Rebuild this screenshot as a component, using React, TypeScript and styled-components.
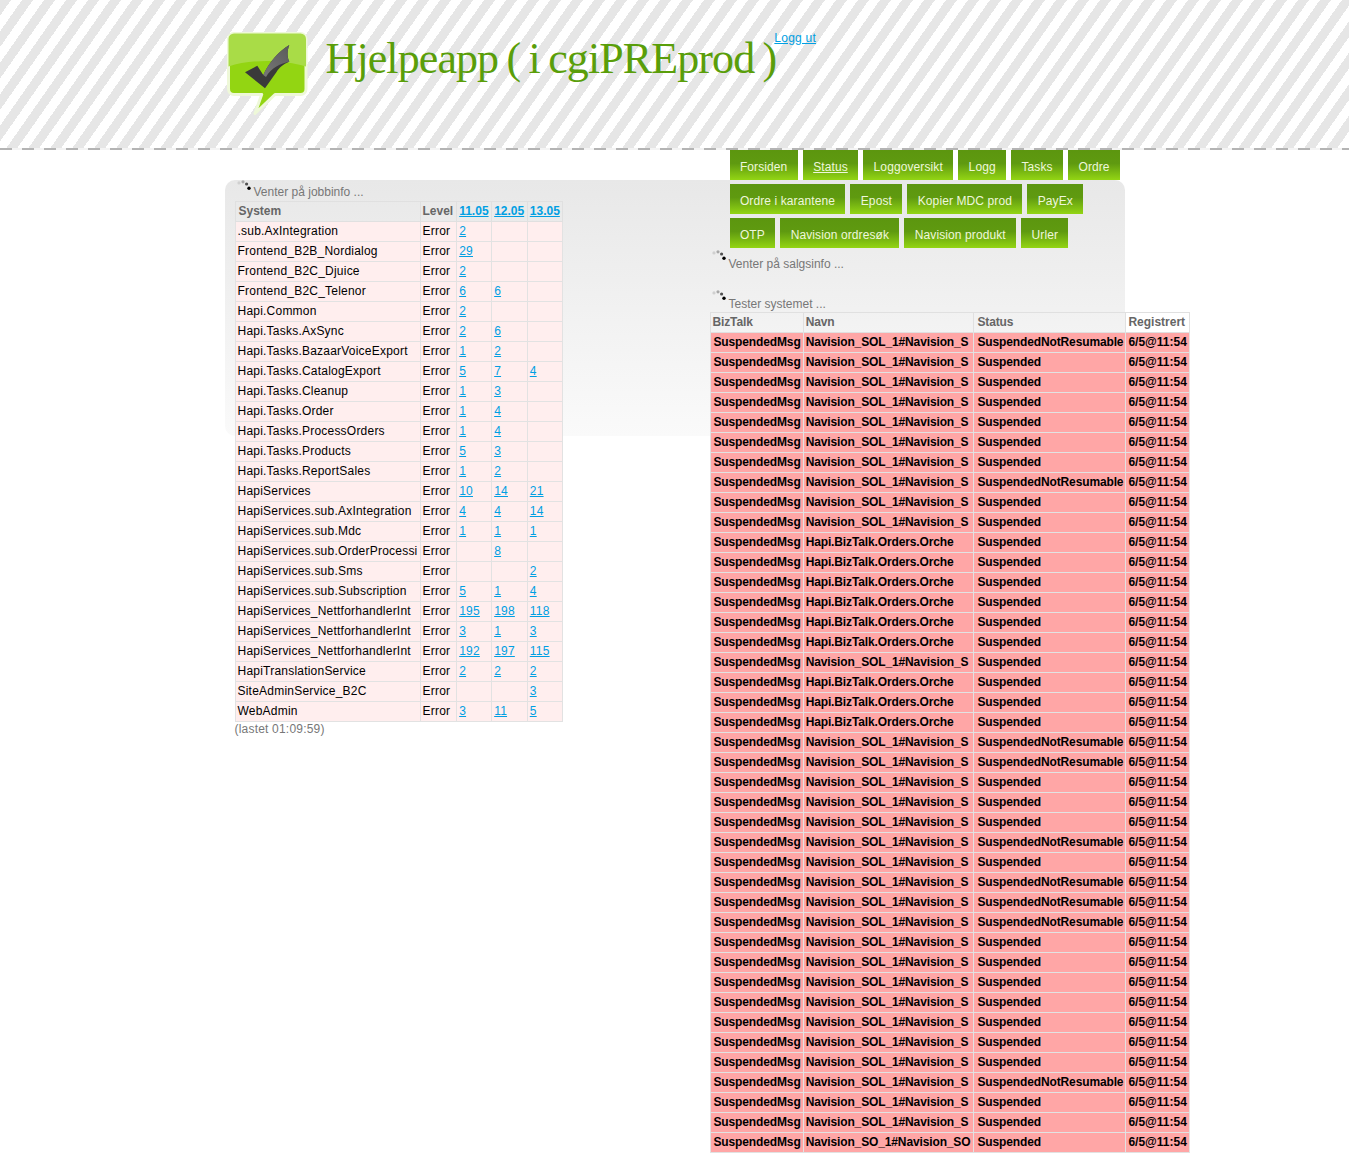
import React from "react";
import styled, { createGlobalStyle } from "styled-components";

const GlobalStyle = createGlobalStyle`
  html, body {
    margin: 0;
    padding: 0;
    background: #fff;
    font-family: "Liberation Sans", Arial, sans-serif;
    font-size: 12px;
    color: #000;
  }
`;

const DATES = ["11.05", "12.05", "13.05"];

const systems: [string, string, string, string][] = [
  [".sub.AxIntegration", "2", "", ""],
  ["Frontend_B2B_Nordialog", "29", "", ""],
  ["Frontend_B2C_Djuice", "2", "", ""],
  ["Frontend_B2C_Telenor", "6", "6", ""],
  ["Hapi.Common", "2", "", ""],
  ["Hapi.Tasks.AxSync", "2", "6", ""],
  ["Hapi.Tasks.BazaarVoiceExport", "1", "2", ""],
  ["Hapi.Tasks.CatalogExport", "5", "7", "4"],
  ["Hapi.Tasks.Cleanup", "1", "3", ""],
  ["Hapi.Tasks.Order", "1", "4", ""],
  ["Hapi.Tasks.ProcessOrders", "1", "4", ""],
  ["Hapi.Tasks.Products", "5", "3", ""],
  ["Hapi.Tasks.ReportSales", "1", "2", ""],
  ["HapiServices", "10", "14", "21"],
  ["HapiServices.sub.AxIntegration", "4", "4", "14"],
  ["HapiServices.sub.Mdc", "1", "1", "1"],
  ["HapiServices.sub.OrderProcessi", "", "8", ""],
  ["HapiServices.sub.Sms", "", "", "2"],
  ["HapiServices.sub.Subscription", "5", "1", "4"],
  ["HapiServices_NettforhandlerInt", "195", "198", "118"],
  ["HapiServices_NettforhandlerInt", "3", "1", "3"],
  ["HapiServices_NettforhandlerInt", "192", "197", "115"],
  ["HapiTranslationService", "2", "2", "2"],
  ["SiteAdminService_B2C", "", "", "3"],
  ["WebAdmin", "3", "11", "5"],
];

const NAV_ITEMS = [
  "Forsiden",
  "Status",
  "Loggoversikt",
  "Logg",
  "Tasks",
  "Ordre",
  "Ordre i karantene",
  "Epost",
  "Kopier MDC prod",
  "PayEx",
  "OTP",
  "Navision ordresøk",
  "Navision produkt",
  "Urler",
];

const NAV = "Navision_SOL_1#Navision_S";
const HAPI = "Hapi.BizTalk.Orders.Orche";
const SUS = "Suspended";
const SNR = "SuspendedNotResumable";

const messages: [string, string][] = [
  [NAV, SNR], [NAV, SUS], [NAV, SUS], [NAV, SUS], [NAV, SUS], [NAV, SUS], [NAV, SUS],
  [NAV, SNR], [NAV, SUS], [NAV, SUS],
  [HAPI, SUS], [HAPI, SUS], [HAPI, SUS], [HAPI, SUS], [HAPI, SUS], [HAPI, SUS],
  [NAV, SUS],
  [HAPI, SUS], [HAPI, SUS], [HAPI, SUS],
  [NAV, SNR], [NAV, SNR], [NAV, SUS], [NAV, SUS], [NAV, SUS], [NAV, SNR], [NAV, SUS],
  [NAV, SNR], [NAV, SNR], [NAV, SNR],
  [NAV, SUS], [NAV, SUS], [NAV, SUS], [NAV, SUS], [NAV, SUS], [NAV, SUS], [NAV, SUS],
  [NAV, SNR], [NAV, SUS], [NAV, SUS],
  ["Navision_SO_1#Navision_SO", SUS],
];

const BUBBLE =
  "M9 3.5h66.5a5.5 5.5 0 0 1 5.5 5.5v50a5.5 5.5 0 0 1-5.5 5.5H50L30 83.5 36.7 64.5H9a5.5 5.5 0 0 1-5.5-5.5V9A5.5 5.5 0 0 1 9 3.5z";

const Logo = () => (
  <LogoSvg width="88" height="88" viewBox="0 0 88 88">
    <defs>
      <linearGradient id="checkTop" x1="1" y1="0" x2="0" y2="1">
        <stop offset="0" stopColor="#5a5a5a" />
        <stop offset="1" stopColor="#777" />
      </linearGradient>
    </defs>
    <path d={BUBBLE} fill="#93d512" stroke="#eef8d8" strokeWidth="3" strokeLinejoin="round" />
    <path
      d="M9 3.5h66.5a5.5 5.5 0 0 1 5.5 5.5v27.5C58 29 26 29 3.5 36.5V9A5.5 5.5 0 0 1 9 3.5z"
      fill="#a9dc47"
    />
    <path
      d="M20 42.3L32.3 35.7 38.3 45C44 32 54 21 64.3 15 62 21 62 27 64.3 31.7 58 34 54 38 51.7 41.7L40 58.3z"
      fill="#3a3a3a"
    />
    <path
      d="M38.3 45C44 32 54 21 64.3 15 62 21 62 27 64.3 31.7 56 33 46 38 41 47z"
      fill="url(#checkTop)"
    />
  </LogoSvg>
);

const Spinner = () => (
  <SpinnerSvg width="14" height="12" viewBox="0 0 14 12">
    <circle cx="2" cy="2.9" r="1.6" fill="#d0d0d0" />
    <circle cx="6" cy="1.8" r="1.6" fill="#a8a8a8" />
    <circle cx="9.6" cy="4" r="1.6" fill="#505050" />
    <circle cx="12" cy="8.3" r="1.7" fill="#000" />
  </SpinnerSvg>
);

const App: React.FC = () => (
  <>
    <GlobalStyle />
    <Header>
      <Brand>
        <Logo />
        <Title>Hjelpeapp ( i cgiPREprod )</Title>
        <Logout href="#">Logg ut</Logout>
      </Brand>
    </Header>
    <Main>
      <LeftColumn>
        <JobWaiting>
          <Spinner />
          Venter på jobbinfo ...
        </JobWaiting>
        <Table>
          <thead>
            <tr>
              <HeadCell>System</HeadCell>
              <LevelHead>Level</LevelHead>
              {DATES.map((d) => (
                <DateHead key={d}>
                  <CellLink href="#">{d}</CellLink>
                </DateHead>
              ))}
            </tr>
          </thead>
          <tbody>
            {systems.map(([name, a, b, c], i) => (
              <tr key={i}>
                <SystemCell>{name}</SystemCell>
                <SystemCell>Error</SystemCell>
                {[a, b, c].map((n, j) => (
                  <SystemCell key={j}>
                    {n && <CellLink href="#">{n}</CellLink>}
                  </SystemCell>
                ))}
              </tr>
            ))}
          </tbody>
        </Table>
        <LoadedAt>(lastet 01:09:59)</LoadedAt>
      </LeftColumn>
      <RightColumn>
        <Nav>
          {NAV_ITEMS.map((item) => (
            <NavItem key={item} href="#" $active={item === "Status"}>
              {item}
            </NavItem>
          ))}
        </Nav>
        <Waiting $tall>
          <Spinner />
          Venter på salgsinfo ...
        </Waiting>
        <Waiting>
          <Spinner />
          Tester systemet ...
        </Waiting>
        <MessageTable>
          <thead>
            <tr>
              <MessageHead>BizTalk</MessageHead>
              <MessageHead>Navn</MessageHead>
              <MessageHead>Status</MessageHead>
              <MessageHead>Registrert</MessageHead>
            </tr>
          </thead>
          <tbody>
            {messages.map(([name, status], i) => (
              <tr key={i}>
                <MessageCell>SuspendedMsg</MessageCell>
                <MessageCell>{name}</MessageCell>
                <MessageCell>{status}</MessageCell>
                <MessageCell>6/5@11:54</MessageCell>
              </tr>
            ))}
          </tbody>
        </MessageTable>
      </RightColumn>
    </Main>
  </>
);

const Header = styled.header`
  position: relative;
  height: 150px;
  box-sizing: border-box;
  background: repeating-linear-gradient(
    125deg,
    #e6e6e6 0,
    #e6e6e6 9px,
    #fff 9px,
    #fff 18.02px
  );

  &::after {
    content: "";
    position: absolute;
    left: 0;
    right: 0;
    bottom: 0;
    height: 2px;
    background: repeating-linear-gradient(
      90deg,
      #b4b4b4 0,
      #b4b4b4 12px,
      #f4f4f4 12px,
      #f4f4f4 22px
    );
  }
`;

const Brand = styled.div`
  width: 900px;
  margin: 0 auto;
  padding-top: 30px;
  display: flex;
  align-items: flex-start;
`;

const LogoSvg = styled.svg`
  flex: none;
`;

const Title = styled.h1`
  margin: 3px 0 0 13px;
  font-family: "Liberation Serif", "Times New Roman", serif;
  font-size: 44px;
  font-weight: 400;
  line-height: 52px;
  letter-spacing: -0.9px;
  word-spacing: -1.8px;
  color: #5a9e0a;
  white-space: nowrap;
`;

const Logout = styled.a`
  margin: 1px 0 0 -2px;
  font-size: 12px;
  line-height: 14px;
  letter-spacing: 0.25px;
  color: #009fe3;
`;

const Main = styled.main`
  position: relative;
  isolation: isolate;
  width: 900px;
  margin: 0 auto;
  display: flex;
  align-items: flex-start;

  &::before {
    content: "";
    position: absolute;
    z-index: -1;
    left: 0;
    right: 0;
    top: 30px;
    height: 256px;
    border-radius: 10px;
    background: linear-gradient(#e8e8e8, #fafafa);
  }
`;

const LeftColumn = styled.section`
  flex: none;
  width: 475px;
  margin-left: 10px;
  padding-top: 30px;
`;

const RightColumn = styled.section`
  flex: none;
  width: 415px;
`;

const Nav = styled.nav`
  display: flex;
  flex-wrap: wrap;
  gap: 4px 5px;
  margin-left: 20px;
  width: 395px;
`;

const NavItem = styled.a<{ $active?: boolean }>`
  height: 30px;
  padding: 0 10.4px;
  font-size: 12px;
  line-height: 34px;
  letter-spacing: 0.1px;
  color: #eef7dc;
  background: linear-gradient(#5c960f 0, #5f9a10 45%, #93d514 100%);
  text-decoration: ${(p) => (p.$active ? "underline" : "none")};
  white-space: nowrap;
`;

const Waiting = styled.div<{ $tall?: boolean }>`
  display: flex;
  align-items: flex-end;
  height: 21px;
  margin-top: ${(p) => (p.$tall ? "2px" : "19px")};
  font-size: 12px;
  line-height: 14px;
  color: #777;
  white-space: nowrap;
`;

const JobWaiting = styled(Waiting)`
  margin-top: 0;
  padding-bottom: 2px;
  box-sizing: border-box;
`;

const SpinnerSvg = styled.svg`
  flex: none;
  align-self: flex-start;
  margin: 0 3px 0 2px;
`;

const Table = styled.table`
  border-collapse: collapse;
  width: max-content;
  font-size: 12px;
  line-height: 15px;
  border: 1px solid #e0e0e0;
`;

const MessageTable = styled(Table)`
  margin-top: 1px;
  letter-spacing: -0.13px;
`;

const HeadCell = styled.th`
  padding: 2px;
  border: 1px solid #e0e0e0;
  font-weight: 700;
  text-align: left;
  color: #666;
  white-space: nowrap;

  &:first-child {
    padding-left: 3px;
  }
`;

const LevelHead = styled(HeadCell)`
  padding-right: 3px;
`;

const DateHead = styled(HeadCell)`
  padding-right: 2.6px;
`;

const MessageHead = styled(HeadCell)`
  &:first-child {
    padding-left: 2px;
  }

  &:nth-child(2) {
    padding-right: 3px;
  }

  &:nth-child(3) {
    padding-left: 3px;
  }

  &:last-child {
    letter-spacing: 0;
  }
`;

const CellLink = styled.a`
  color: #009fe3;
`;

const SystemCell = styled.td`
  padding: 2px;
  border: 1px solid #e2e2e2;
  background: #ffeeee;
  letter-spacing: 0.22px;
  white-space: nowrap;
`;

const MessageCell = styled.td`
  padding: 2px;
  border: 1px solid #e2e2e2;
  background: #ffa6a6;
  font-weight: 700;
  white-space: nowrap;

  &:first-child {
    padding-left: 3px;
  }

  &:nth-child(2) {
    padding-right: 3px;
  }

  &:nth-child(3) {
    padding-left: 3px;
  }

  &:last-child {
    letter-spacing: 0;
  }
`;

const LoadedAt = styled.p`
  margin: 0;
  font-size: 12px;
  line-height: 15px;
  letter-spacing: 0.2px;
  color: #777;
`;

export default App;
